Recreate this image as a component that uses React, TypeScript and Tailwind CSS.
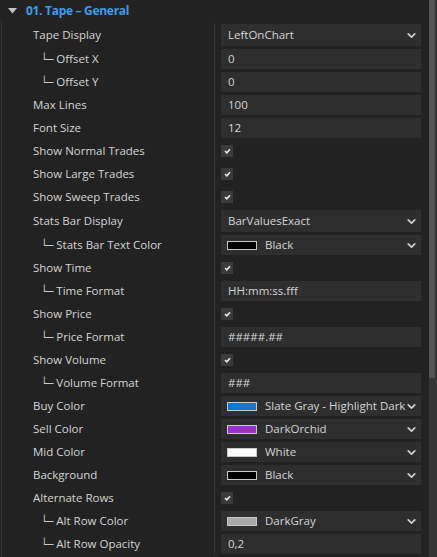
import { ChevronDown } from 'lucide-react';

type Row =
  | { label: string; sub?: boolean; kind: 'enum'; value: string }
  | { label: string; sub?: boolean; kind: 'text'; value: string }
  | { label: string; sub?: boolean; kind: 'check' }
  | { label: string; sub?: boolean; kind: 'color'; value: string; swatch: string };

const rows: Row[] = [
  { label: 'Tape Display', kind: 'enum', value: 'LeftOnChart' },
  { label: 'Offset X', sub: true, kind: 'text', value: '0' },
  { label: 'Offset Y', sub: true, kind: 'text', value: '0' },
  { label: 'Max Lines', kind: 'text', value: '100' },
  { label: 'Font Size', kind: 'text', value: '12' },
  { label: 'Show Normal Trades', kind: 'check' },
  { label: 'Show Large Trades', kind: 'check' },
  { label: 'Show Sweep Trades', kind: 'check' },
  { label: 'Stats Bar Display', kind: 'enum', value: 'BarValuesExact' },
  { label: 'Stats Bar Text Color', sub: true, kind: 'color', value: 'Black', swatch: '#000000' },
  { label: 'Show Time', kind: 'check' },
  { label: 'Time Format', sub: true, kind: 'text', value: 'HH:mm:ss.fff' },
  { label: 'Show Price', kind: 'check' },
  { label: 'Price Format', sub: true, kind: 'text', value: '#####.##' },
  { label: 'Show Volume', kind: 'check' },
  { label: 'Volume Format', sub: true, kind: 'text', value: '###' },
  { label: 'Buy Color', kind: 'color', value: 'Slate Gray - Highlight Dark', swatch: '#0a78d4' },
  { label: 'Sell Color', kind: 'color', value: 'DarkOrchid', swatch: '#9932cc' },
  { label: 'Mid Color', kind: 'color', value: 'White', swatch: '#ffffff' },
  { label: 'Background', kind: 'color', value: 'Black', swatch: '#000000' },
  { label: 'Alternate Rows', kind: 'check' },
  { label: 'Alt Row Color', sub: true, kind: 'color', value: 'DarkGray', swatch: '#a9a9a9' },
  { label: 'Alt Row Opacity', sub: true, kind: 'text', value: '0,2' },
];

const Chevron = () => (
  <ChevronDown size={13} strokeWidth={3.2} className="shrink-0 text-[#cfcfcf]" />
);

const Value = ({ row }: { row: Row }) => {
  if (row.kind === 'check') {
    return (
      <div className="w-[12px] h-[12px] bg-[#3a3a3a] flex items-center justify-center">
        <svg width="7" height="6" viewBox="0 0 7 6">
          <path d="M1 3 L2.8 4.8 L6 1.2" stroke="#e6e6e6" strokeWidth="1.7" fill="none" />
        </svg>
      </div>
    );
  }
  if (row.kind === 'text') {
    return (
      <div className="h-[20px] w-full bg-[#2e2e2e] flex items-center pl-[7px]">
        <span>{row.value}</span>
      </div>
    );
  }
  if (row.kind === 'enum') {
    return (
      <div className="h-[22px] w-full bg-[#2e2e2e] flex items-center pl-[7px] pr-[3px]">
        <span className="flex-1 truncate">{row.value}</span>
        <Chevron />
      </div>
    );
  }
  return (
    <div className="h-[20px] w-full bg-[#2e2e2e] flex items-center pl-[6px] pr-[3px]">
      <div
        className="w-[30px] h-[9px] border border-[#c8c8c8] shrink-0"
        style={{ backgroundColor: row.swatch }}
      />
      <span className="flex-1 ml-[8px] whitespace-nowrap overflow-hidden">{row.value}</span>
      <Chevron />
    </div>
  );
};

export default function App() {
  return (
    <div
      className="w-[437px] h-[557px] bg-[#222222] text-[#d4d4d4] text-[11.5px] flex overflow-hidden"
      style={{ fontFamily: '"Open Sans", "Noto Sans", sans-serif' }}
    >
      <div className="flex-1 flex flex-col">
        {/* Category header */}
        <div className="h-[21px] flex items-center shrink-0">
          <svg width="9" height="6" viewBox="0 0 9 6" className="ml-[8px] mt-[1px]">
            <path d="M0 0 H9 L4.5 5.5 Z" fill="#c4c4c4" />
          </svg>
          <span className="ml-[9px] font-bold text-[12px] text-[#3d9bea] tracking-[-0.3px]">
            01. Tape – General
          </span>
        </div>

        {/* Properties */}
        <div className="flex-1 pt-[1.5px] ml-[1px] border-l border-[#333333]">
          {rows.map((row) => (
            <div
              key={row.label}
              className={`flex ${row.kind === 'enum' ? 'h-[25px]' : 'h-[23px]'}`}
            >
              <div className="w-[213px] shrink-0 border-r border-[#363636] flex items-center">
                {row.sub ? (
                  <span className="pl-[38px] whitespace-nowrap">
                    <span className="text-[#c8c8c8] tracking-[-3px]">└─</span>
                    <span className="ml-[6px]">{row.label}</span>
                  </span>
                ) : (
                  <span className="pl-[31px] whitespace-nowrap">{row.label}</span>
                )}
              </div>
              <div className="flex-1 flex items-center pl-[6px] pr-[8px]">
                <Value row={row} />
              </div>
            </div>
          ))}
        </div>
      </div>

      {/* Scrollbar */}
      <div className="w-[9px] flex flex-col bg-[#353535]">
        <div className="h-[378px] w-[6px] bg-[#555555]" />
      </div>
    </div>
  );
}
